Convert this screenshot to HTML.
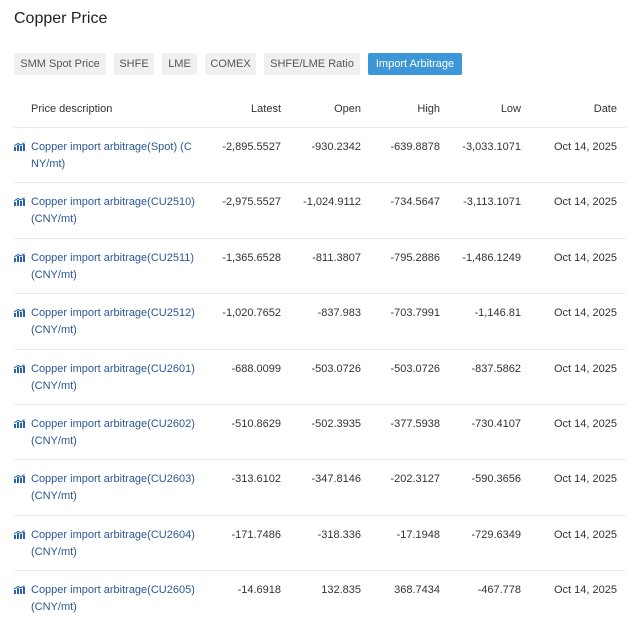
<!DOCTYPE html>
<html><head><meta charset="utf-8"><style>
*{margin:0;padding:0;box-sizing:border-box}
body{width:636px;height:628px;background:#fff;font-family:"Liberation Sans",sans-serif;color:#333;overflow:hidden;position:relative}
h1{position:absolute;left:14px;top:10px;font-size:16px;font-weight:normal;color:#222}
.tab{position:absolute;top:53px;height:22px;line-height:23px;font-size:11px;background:#f0f0f0;color:#555;text-align:center;border-radius:2px}
.tab.on{background:#3d96d8;color:#fff}
.hdr{position:absolute;top:103px;font-size:11px;color:#333}
.line{position:absolute;left:14px;width:612px;height:1px;background:#ececec}
.c{position:absolute;font-size:11px;color:#333;text-align:right;white-space:nowrap}
.d{position:absolute;left:31px;font-size:11px;color:#2b5797;line-height:17px;width:172px}
svg{position:absolute;left:14px}
</style></head><body>
<h1>Copper Price</h1>
<div class="tab" style="left:14px;width:92px">SMM Spot Price</div>
<div class="tab" style="left:114px;width:40px">SHFE</div>
<div class="tab" style="left:162px;width:35px">LME</div>
<div class="tab" style="left:205px;width:51px">COMEX</div>
<div class="tab" style="left:264px;width:96px">SHFE/LME Ratio</div>
<div class="tab on" style="left:368px;width:94px">Import Arbitrage</div>
<div class="hdr" style="left:31px">Price description</div>
<div class="hdr" style="right:355px">Latest</div>
<div class="hdr" style="right:275px">Open</div>
<div class="hdr" style="right:196px">High</div>
<div class="hdr" style="right:115px">Low</div>
<div class="hdr" style="right:19px">Date</div>
<div class="line" style="top:127px"></div>
<div id="rows"></div>
<script>
var d=[["Copper import arbitrage(Spot) (C<br>NY/mt)","-2,895.5527","-930.2342","-639.8878","-3,033.1071"],
["Copper import arbitrage(CU2510)<br>(CNY/mt)","-2,975.5527","-1,024.9112","-734.5647","-3,113.1071"],
["Copper import arbitrage(CU2511)<br>(CNY/mt)","-1,365.6528","-811.3807","-795.2886","-1,486.1249"],
["Copper import arbitrage(CU2512)<br>(CNY/mt)","-1,020.7652","-837.983","-703.7991","-1,146.81"],
["Copper import arbitrage(CU2601)<br>(CNY/mt)","-688.0099","-503.0726","-503.0726","-837.5862"],
["Copper import arbitrage(CU2602)<br>(CNY/mt)","-510.8629","-502.3935","-377.5938","-730.4107"],
["Copper import arbitrage(CU2603)<br>(CNY/mt)","-313.6102","-347.8146","-202.3127","-590.3656"],
["Copper import arbitrage(CU2604)<br>(CNY/mt)","-171.7486","-318.336","-17.1948","-729.6349"],
["Copper import arbitrage(CU2605)<br>(CNY/mt)","-14.6918","132.835","368.7434","-467.778"]];
var h="",R=[355,275,196,115];
for(var i=0;i<9;i++){var t=127+i*55.4;
h+='<svg style="top:'+(t+15)+'px" width="11" height="9" viewBox="0 0 11 9"><rect x="0" y="5" width="2" height="4" fill="#2a62b0"/><rect x="3" y="3" width="2" height="6" fill="#2a62b0"/><rect x="6" y="4" width="2" height="5" fill="#2a62b0"/><rect x="9" y="2" width="2" height="7" fill="#2a62b0"/><path d="M0 4 L4 1.5 L7 3 L10.5 0.5" stroke="#2a62b0" stroke-width="1" fill="none"/></svg>';
h+='<div class="d" style="top:'+(t+12)+'px">'+d[i][0]+'</div>';
for(var j=0;j<4;j++)h+='<div class="c" style="top:'+(t+14)+'px;right:'+R[j]+'px">'+d[i][j+1]+'</div>';
h+='<div class="c" style="top:'+(t+14)+'px;right:19px">Oct 14, 2025</div>';
if(i<8)h+='<div class="line" style="top:'+Math.round(t+55.4)+'px"></div>';}
document.getElementById("rows").innerHTML=h;
</script>
</body></html>
